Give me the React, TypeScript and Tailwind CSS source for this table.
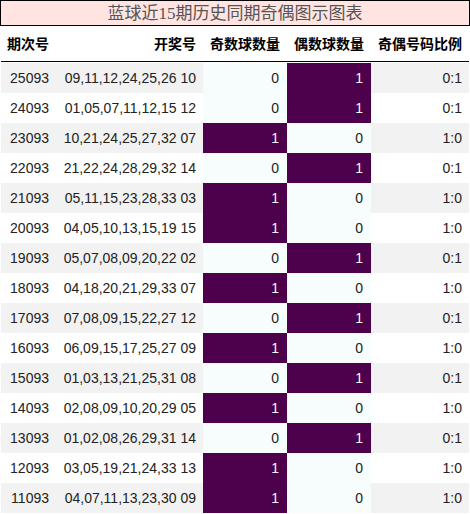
import React from 'react'

// 期次号, 开奖号 (6 red + blue), odd count, even count
const ROWS: [string, string, number][] = [
  ['25093', '09,11,12,24,25,26 10', 0],
  ['24093', '01,05,07,11,12,15 12', 0],
  ['23093', '10,21,24,25,27,32 07', 1],
  ['22093', '21,22,24,28,29,32 14', 0],
  ['21093', '05,11,15,23,28,33 03', 1],
  ['20093', '04,05,10,13,15,19 15', 1],
  ['19093', '05,07,08,09,20,22 02', 0],
  ['18093', '04,18,20,21,29,33 07', 1],
  ['17093', '07,08,09,15,22,27 12', 0],
  ['16093', '06,09,15,17,25,27 09', 1],
  ['15093', '01,03,13,21,25,31 08', 0],
  ['14093', '02,08,09,10,20,29 05', 1],
  ['13093', '01,02,08,26,29,31 14', 0],
  ['12093', '03,05,19,21,24,33 13', 1],
  ['11093', '04,07,11,13,23,30 09', 1],
]

function HeatCell({ value }: { value: number }): React.ReactElement {
  return (
    <div
      className={
        value === 1
          ? 'w-[84px] flex items-center justify-end pr-[8px] bg-[#4d004b] text-[#f7f7f7]'
          : 'w-[84px] flex items-center justify-end pr-[8px] bg-[#f7fcfd] text-[#222]'
      }
    >
      {value}
    </div>
  )
}

export default function App(): React.ReactElement {
  return (
    <div className="w-[470px] h-[514px] bg-white overflow-hidden">
      {/* Title */}
      <div className="h-[26px] border border-black bg-[#ffe4e1] flex items-center justify-center text-[17px] text-[#555] font-['Liberation_Serif','Noto_Sans_CJK_SC',serif] leading-none">
        蓝球近15期历史同期奇偶图示图表
      </div>

      <div className="px-[1px]">
        {/* Header */}
        <div className="h-[36px] flex items-center border-b border-black text-[14px] font-bold text-black font-['Noto_Sans_CJK_SC',sans-serif]">
          <div className="w-[55px] text-right pr-[7px]">期次号</div>
          <div className="w-[147px] text-right pr-[7px]">开奖号</div>
          <div className="w-[84px] text-right pr-[7px]">奇数球数量</div>
          <div className="w-[84px] text-right pr-[7px]">偶数球数量</div>
          <div className="w-[98px] text-right pr-[7px]">奇偶号码比例</div>
        </div>

        {/* Rows */}
        <div className="pt-[1px] font-['Liberation_Sans',Arial,sans-serif] text-[14px] text-[#222]">
          {ROWS.map(([issue, nums, odd], i) => (
            <div
              key={issue}
              className={i % 2 === 0 ? 'h-[30px] flex bg-[#f2f2f2]' : 'h-[30px] flex bg-white'}
            >
              <div className="w-[55px] flex items-center justify-end pr-[7px]">{issue}</div>
              <div className="w-[147px] flex items-center justify-end pr-[7px]">{nums}</div>
              <HeatCell value={odd} />
              <HeatCell value={1 - odd} />
              <div className="w-[98px] flex items-center justify-end pr-[7px]">
                {odd}:{1 - odd}
              </div>
            </div>
          ))}
        </div>
      </div>
    </div>
  )
}
